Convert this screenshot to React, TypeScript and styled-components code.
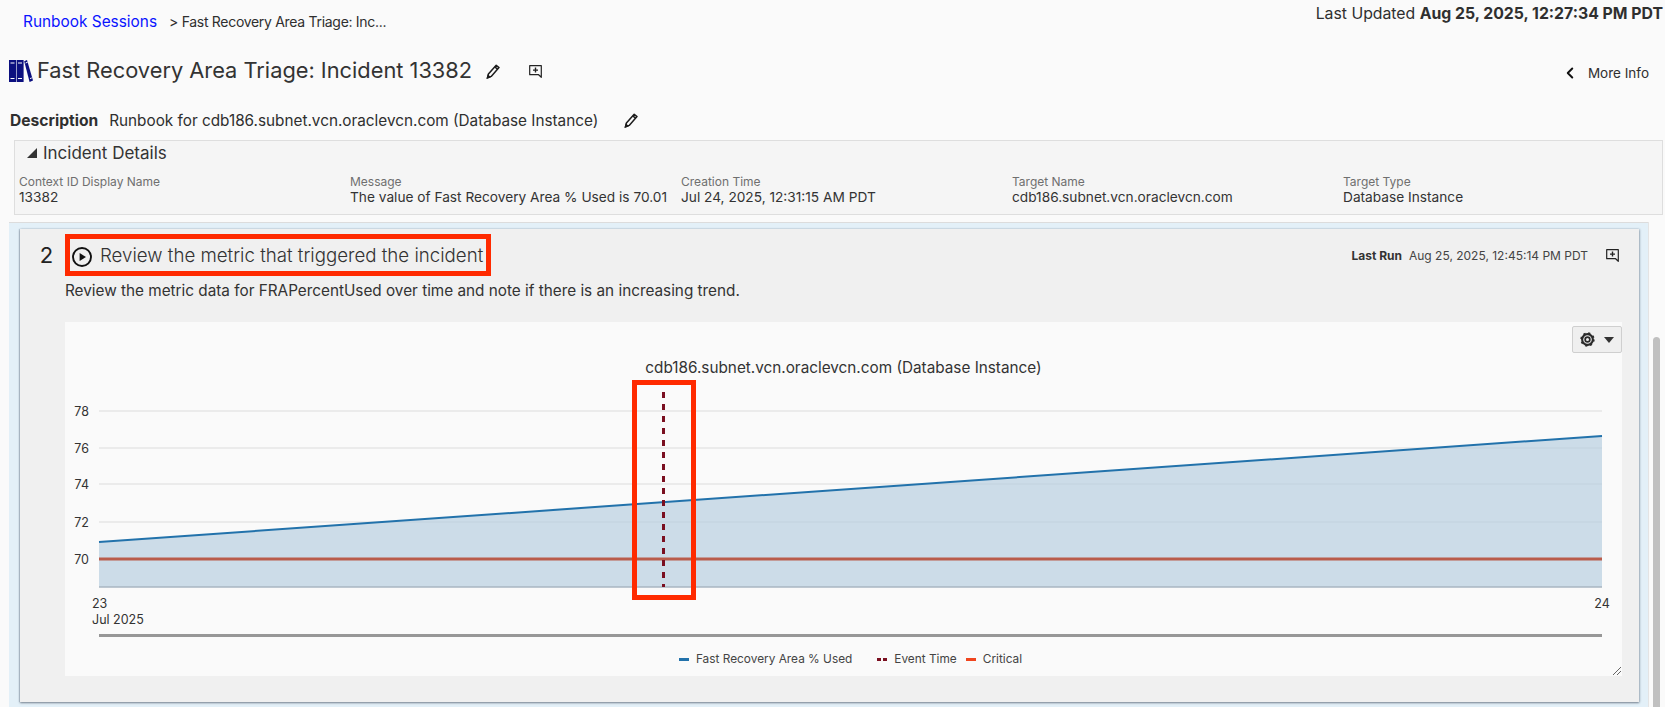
import styled, { createGlobalStyle } from 'styled-components'
import { ChevronLeft } from 'lucide-react'

const GlobalStyle = createGlobalStyle`
  html, body {
    margin: 0;
    padding: 0;
    background: #fafafa;
  }
  body {
    font-family: Inter, "Liberation Sans", sans-serif;
    color: #2f2f2f;
  }
`

const Page = styled.div`
  width: 1665px;
  height: 707px;
  overflow: hidden;
  display: flex;
  flex-direction: column;
  background: #fafafa;
`
const TopBar = styled.div`
  height: 44px;
  flex: none;
  display: flex;
  justify-content: space-between;
  align-items: flex-start;
  padding: 0 2px 0 23px;
`
const Breadcrumbs = styled.div`
  display: flex;
  align-items: baseline;
  gap: 12px;
  font-size: 14px;
  letter-spacing: -0.3px;
  line-height: 18px;
  padding-top: 13px;
`
const CrumbLink = styled.a`
  color: #0a14ff;
  font-size: 15.4px;
  letter-spacing: 0;
  text-decoration: none;
`
const Updated = styled.div`
  font-size: 15.8px;
  line-height: 18px;
  padding-top: 5px;

  b {
    font-weight: 700;
  }
`
const TitleRow = styled.div`
  height: 54px;
  flex: none;
  display: flex;
  align-items: center;
  padding: 0 12px 0 9px;
`
const Title = styled.h1`
  margin: 0 0 2px 4px;
  font-size: 21.8px;
  font-weight: 400;
  color: #333;
`
const IconButton = styled.span<{ $left: number }>`
  display: inline-flex;
  margin-left: ${p => p.$left}px;
`
const MoreInfo = styled.div`
  margin-left: auto;
  display: flex;
  align-items: center;
  gap: 9px;
  font-size: 13.5px;
  padding: 3px 4px 0 0;
`
const DescriptionRow = styled.div`
  height: 42px;
  flex: none;
  display: flex;
  align-items: center;
  padding: 3px 0 0 10px;
  box-sizing: border-box;
  font-size: 15.3px;
`
const DescriptionLabel = styled.b`
  font-size: 15.6px;
  font-weight: 700;
  margin-right: 11px;
`
const DetailsPanel = styled.section`
  flex: none;
  height: 75px;
  box-sizing: border-box;
  margin: 0 2px 7px 14px;
  background: #f5f5f5;
  border: 1px solid #dedede;
  padding: 2px 0 0 4px;
`
const DetailsTitle = styled.div`
  display: flex;
  align-items: center;
  gap: 6px;
  height: 19px;
  padding-left: 8px;
  font-size: 17px;
  color: #333;
`
const Triangle = styled.span`
  width: 0;
  height: 0;
  border-style: solid;
  border-width: 0 0 10px 10px;
  border-color: transparent transparent #333 transparent;
`
const DetailsGrid = styled.div`
  display: grid;
  grid-template-columns: repeat(5, 331px);
  margin-top: 12px;
`
const Field = styled.div`
  min-width: 0;
  padding-right: 12px;
`
const FieldLabel = styled.div`
  font-size: 12px;
  line-height: 15px;
  color: #6f6f6f;
  white-space: nowrap;
`
const FieldValue = styled.div`
  font-size: 13.7px;
  line-height: 16px;
  color: #333;
  white-space: nowrap;
`
const Workspace = styled.div`
  flex: 1;
  min-height: 0;
  display: flex;
  margin-left: 9px;
`
const StepArea = styled.div`
  flex: 1;
  min-width: 0;
  background: #e3f0f8;
  border-top: 1px solid #dcdcdc;
  padding: 6px 9px 0 11px;
`
const ScrollTrack = styled.div`
  flex: none;
  width: 17px;
  box-sizing: border-box;
  padding: 115px 5px 0 4px;
  border-left: 1px solid #e4e4e4;
  background: #fafafa;
`
const ScrollThumb = styled.div`
  height: 100%;
  background: #c0c0c0;
  border-radius: 4px 4px 0 0;
`
const StepCard = styled.article`
  height: 473px;
  box-sizing: border-box;
  background: #f0f0f0;
  box-shadow: 0 1px 2px rgba(60, 70, 85, 0.6), 1px 0 2px rgba(120, 140, 160, 0.35), -1px 0 1px rgba(120, 140, 160, 0.3);
  display: grid;
  grid-template-columns: 45px 1fr;
  padding: 5px 17px 0 0;
`
const StepNumber = styled.div`
  font-size: 22px;
  line-height: 42px;
  color: #222;
  text-align: center;
  padding-left: 8px;
`
const StepBody = styled.div`
  min-width: 0;
`
const StepHeader = styled.div`
  height: 42px;
  display: flex;
  align-items: center;
  justify-content: space-between;
`
const TitleBox = styled.div`
  width: 426px;
  height: 42px;
  box-sizing: border-box;
  border: 5px solid #ff2a00;
  display: flex;
  align-items: center;
  gap: 8px;
  padding-left: 2px;
  font-size: 18.7px;
  font-weight: 300;
  color: #333;
  white-space: nowrap;
`
const PlayGlyph = styled.svg`
  flex: none;
  margin-top: 4px;
`
const RunInfo = styled.div`
  display: flex;
  align-items: center;
  font-size: 12px;
  color: #444;
  padding-right: 3px;

  b {
    font-weight: 700;
    margin-right: 7px;
    color: #333;
  }
`
const StepText = styled.p`
  margin: 6px 0 0;
  font-size: 15.3px;
  line-height: 18px;
  color: #333;
`
const ChartPanel = styled.div`
  position: relative;
  height: 354px;
  margin-top: 22px;
  background: #fafafa;
`
const GearButton = styled.button`
  position: absolute;
  top: 4px;
  right: 0;
  width: 50px;
  height: 27px;
  box-sizing: border-box;
  background: #efefef;
  border: 1px solid #cfcfcf;
  border-radius: 2px;
  display: flex;
  align-items: center;
  justify-content: center;
  gap: 9px;
  padding: 0;
`
const Caret = styled.span`
  width: 0;
  height: 0;
  border-style: solid;
  border-width: 6px 5px 0 5px;
  border-color: #333 transparent transparent transparent;
`
const ChartTitle = styled.div`
  padding-top: 36px;
  height: 20px;
  line-height: 20px;
  text-align: center;
  font-size: 15.3px;
  color: #333;
`
const ChartSvg = styled.svg`
  display: block;
  width: 1557px;
  height: 262px;

  text {
    font-family: Inter, "Liberation Sans", sans-serif;
    font-size: 12.5px;
    fill: #333;
  }
`
const Legend = styled.div`
  display: flex;
  justify-content: center;
  align-items: center;
  height: 16px;
  margin-top: 11px;
  padding-left: 14px;
  font-size: 11.85px;
  color: #444;
`
const LegendItem = styled.span<{ $gap: number }>`
  display: inline-flex;
  align-items: center;
  gap: 7px;
  margin-right: ${p => p.$gap}px;
`
const Swatch = styled.span<{ $color: string; $dashed?: boolean }>`
  width: 10px;
  height: 3px;
  background: ${p =>
    p.$dashed
      ? `repeating-linear-gradient(90deg, ${p.$color} 0 4px, transparent 4px 6px)`
      : p.$color};
`
const EventMarker = styled.div`
  position: absolute;
  left: 567px;
  top: 58px;
  width: 64px;
  height: 220px;
  box-sizing: border-box;
  border: 5px solid #ff2a00;
`
const ResizeGrip = styled.svg`
  position: absolute;
  right: 1px;
  bottom: 1px;
`

function BooksIcon() {
  return (
    <svg width="24" height="24" viewBox="0 0 24 24">
      <rect x="0" y="1" width="7" height="22" fill="#0b0f7f" />
      <rect x="7.6" y="1" width="7" height="22" fill="#0b0f7f" />
      <path d="M15.2 2.2 L18 1 L24 21.6 L20.6 23 Z" fill="#0b0f7f" />
      <path d="M1.5 4h4M1.5 19.5h4M9 4h4M9 19.5h4M16.6 4l2-.8M21 19.6l1.8-.7" stroke="#fff" strokeWidth="1" />
    </svg>
  )
}

function PencilIcon() {
  return (
    <svg width="14" height="15" viewBox="0 0 14 15" fill="none" stroke="#1c1c1c" strokeWidth="1.5">
      <path d="M10.2 1.2 L13 3.6 L5.2 12.4 L1.5 13.8 L2.4 10 Z" strokeLinejoin="round" />
      <path d="M8.8 2.9 L11.6 5.3" />
      <path d="M1.5 13.8 L2.2 11.6 L3.6 12.9 Z" fill="#1c1c1c" />
    </svg>
  )
}

function CommentIcon() {
  return (
    <svg width="13" height="13" viewBox="0 0 13 13" fill="none" stroke="#222">
      <path d="M.7.7 H12.3 V12.3 L9.6 9.7 H.7 Z" strokeWidth="1.2" strokeLinejoin="round" />
      <path d="M6.5 2.6 V7.6 M4 5.1 H9" strokeWidth="1.4" />
    </svg>
  )
}

function PlayIcon() {
  return (
    <PlayGlyph width="20" height="20" viewBox="0 0 20 20">
      <circle cx="10" cy="10" r="9" fill="none" stroke="#111" strokeWidth="1.9" />
      <path d="M7.6 6.1 L14 10 L7.6 13.9 Z" fill="#111" />
    </PlayGlyph>
  )
}

function GearIcon() {
  return (
    <svg width="15" height="15" viewBox="0 0 14 14" fill="none" stroke="#2a2a2a">
      <circle cx="7" cy="7" r="2.2" strokeWidth="1.6" />
      <circle cx="7" cy="7" r="5" strokeWidth="2" />
      <circle cx="7" cy="7" r="5.9" strokeWidth="1.6" strokeDasharray="2 2.63" />
    </svg>
  )
}

const details = [
  { label: 'Context ID Display Name', value: '13382' },
  { label: 'Message', value: 'The value of Fast Recovery Area % Used is 70.01' },
  { label: 'Creation Time', value: 'Jul 24, 2025, 12:31:15 AM PDT' },
  { label: 'Target Name', value: 'cdb186.subnet.vcn.oraclevcn.com' },
  { label: 'Target Type', value: 'Database Instance' },
]

// svg origin is the chart panel at x 65, y 378 of the page
const gridLines = [
  { label: '78', y: 33 },
  { label: '76', y: 70 },
  { label: '74', y: 106 },
  { label: '72', y: 144 },
  { label: '70', y: 181 },
]

function MetricChart() {
  return (
    <ChartSvg viewBox="0 0 1557 262">
      {gridLines.map(g => (
        <g key={g.label}>
          <line x1="34" x2="1537" y1={g.y} y2={g.y} stroke="#e6e6e6" strokeWidth="1.5" />
          <text x="24" y={g.y + 4.5} textAnchor="end">
            {g.label}
          </text>
        </g>
      ))}
      <path d="M34 164 L1537 58 V209 H34 Z" fill="#b5cddf" fillOpacity="0.68" />
      <line x1="34" x2="1537" y1="209" y2="209" stroke="#a9b6c2" strokeWidth="1.5" />
      <line x1="34" x2="1537" y1="164" y2="58" stroke="#2272ab" strokeWidth="2" />
      <line x1="34" x2="1537" y1="181" y2="181" stroke="#b95c4b" strokeWidth="3" />
      <line x1="598.5" x2="598.5" y1="14" y2="209" stroke="#7a0f20" strokeWidth="3" strokeDasharray="6 6" />
      <text x="27" y="230">
        23
      </text>
      <text x="27" y="246">
        Jul 2025
      </text>
      <text x="1537" y="230" textAnchor="middle">
        24
      </text>
      <rect x="34" y="256" width="1503" height="3" fill="#979797" />
    </ChartSvg>
  )
}

export default function App() {
  return (
    <Page>
      <GlobalStyle />
      <TopBar>
        <Breadcrumbs>
          <CrumbLink href="#">Runbook Sessions</CrumbLink>
          <span>&gt; Fast Recovery Area Triage: Inc...</span>
        </Breadcrumbs>
        <Updated>
          Last Updated <b>Aug 25, 2025, 12:27:34 PM PDT</b>
        </Updated>
      </TopBar>
      <TitleRow>
        <BooksIcon />
        <Title>Fast Recovery Area Triage: Incident 13382</Title>
        <IconButton $left={14}>
          <PencilIcon />
        </IconButton>
        <IconButton $left={29}>
          <CommentIcon />
        </IconButton>
        <MoreInfo>
          <ChevronLeft size={18} strokeWidth={2.6} color="#111" />
          More Info
        </MoreInfo>
      </TitleRow>
      <DescriptionRow>
        <DescriptionLabel>Description</DescriptionLabel>
        Runbook for cdb186.subnet.vcn.oraclevcn.com (Database Instance)
        <IconButton $left={26}>
          <PencilIcon />
        </IconButton>
      </DescriptionRow>
      <DetailsPanel>
        <DetailsTitle>
          <Triangle />
          Incident Details
        </DetailsTitle>
        <DetailsGrid>
          {details.map(d => (
            <Field key={d.label}>
              <FieldLabel>{d.label}</FieldLabel>
              <FieldValue>{d.value}</FieldValue>
            </Field>
          ))}
        </DetailsGrid>
      </DetailsPanel>
      <Workspace>
        <StepArea>
          <StepCard>
            <StepNumber>2</StepNumber>
            <StepBody>
              <StepHeader>
                <TitleBox>
                  <PlayIcon />
                  Review the metric that triggered the incident
                </TitleBox>
                <RunInfo>
                  <b>Last Run</b>
                  Aug 25, 2025, 12:45:14 PM PDT
                  <IconButton $left={18}>
                    <CommentIcon />
                  </IconButton>
                </RunInfo>
              </StepHeader>
              <StepText>Review the metric data for FRAPercentUsed over time and note if there is an increasing trend.</StepText>
              <ChartPanel>
                <GearButton aria-label="Chart actions">
                  <GearIcon />
                  <Caret />
                </GearButton>
                <ChartTitle>cdb186.subnet.vcn.oraclevcn.com (Database Instance)</ChartTitle>
                <MetricChart />
                <Legend>
                  <LegendItem $gap={25}>
                    <Swatch $color="#2272ab" />
                    Fast Recovery Area % Used
                  </LegendItem>
                  <LegendItem $gap={9}>
                    <Swatch $color="#7a0f20" $dashed />
                    Event Time
                  </LegendItem>
                  <LegendItem $gap={0}>
                    <Swatch $color="#f0451e" />
                    Critical
                  </LegendItem>
                </Legend>
                <EventMarker />
                <ResizeGrip width="8" height="8" viewBox="0 0 8 8" stroke="#666">
                  <path d="M0 8 L8 0 M4 8 L8 4" />
                </ResizeGrip>
              </ChartPanel>
            </StepBody>
          </StepCard>
        </StepArea>
        <ScrollTrack>
          <ScrollThumb />
        </ScrollTrack>
      </Workspace>
    </Page>
  )
}
